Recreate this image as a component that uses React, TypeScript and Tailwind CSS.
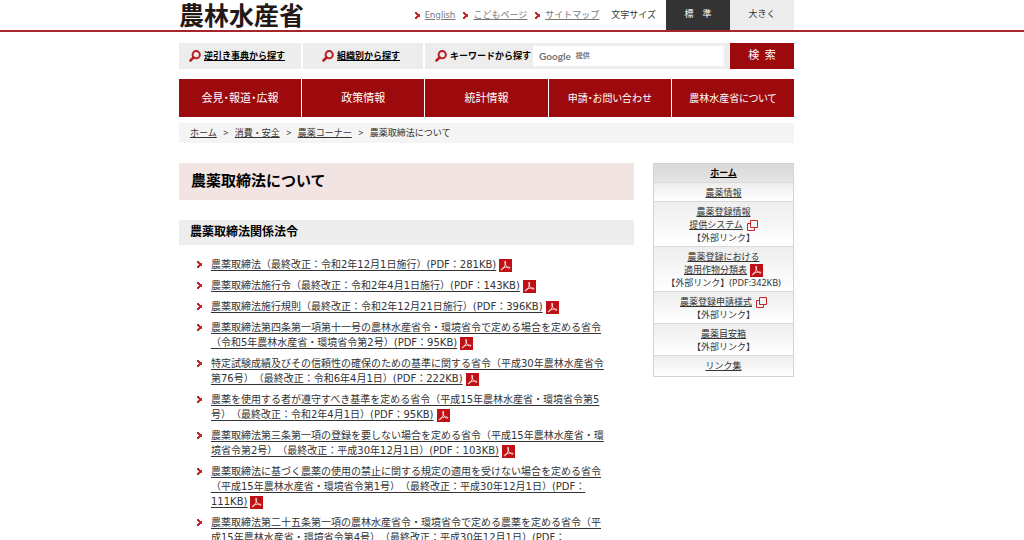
import React from 'react'
import clsx from 'clsx'

const HEADER_LINKS = ['English', 'こどもページ', 'サイトマップ']

const NAV_ITEMS = [
  '会見・報道・広報',
  '政策情報',
  '統計情報',
  '申請・お問い合わせ',
  '農林水産省について',
]

const BREADCRUMBS = ['ホーム', '消費・安全', '農薬コーナー']

// every entry is a list of its lines
const LAWS: string[][] = [
  ['農薬取締法（最終改正：令和2年12月1日施行）(PDF：281KB)'],
  ['農薬取締法施行令（最終改正：令和2年4月1日施行）(PDF：143KB)'],
  ['農薬取締法施行規則（最終改正：令和2年12月21日施行）(PDF：396KB)'],
  [
    '農薬取締法第四条第一項第十一号の農林水産省令・環境省令で定める場合を定める省令',
    '（令和5年農林水産省・環境省令第2号）(PDF：95KB)',
  ],
  [
    '特定試験成績及びその信頼性の確保のための基準に関する省令（平成30年農林水産省令',
    '第76号）（最終改正：令和6年4月1日）(PDF：222KB)',
  ],
  [
    '農薬を使用する者が遵守すべき基準を定める省令（平成15年農林水産省・環境省令第5',
    '号）（最終改正：令和2年4月1日）(PDF：95KB)',
  ],
  [
    '農薬取締法第三条第一項の登録を要しない場合を定める省令（平成15年農林水産省・環',
    '境省令第2号）（最終改正：平成30年12月1日）(PDF：103KB)',
  ],
  [
    '農薬取締法に基づく農薬の使用の禁止に関する規定の適用を受けない場合を定める省令',
    '（平成15年農林水産省・環境省令第1号）（最終改正：平成30年12月1日）(PDF：',
    '111KB)',
  ],
  [
    '農薬取締法第二十五条第一項の農林水産省令・環境省令で定める農薬を定める省令（平',
    '成15年農林水産省・環境省令第4号）（最終改正：平成30年12月1日）(PDF：',
  ],
]

interface SideItem {
  lines: string[]
  icon?: 'external' | 'pdf'
  note?: string
}

const SIDE_ITEMS: SideItem[] = [
  { lines: ['農薬情報'] },
  {
    lines: ['農薬登録情報', '提供システム'],
    icon: 'external',
    note: '【外部リンク】',
  },
  {
    lines: ['農薬登録における', '適用作物分類表'],
    icon: 'pdf',
    note: '【外部リンク】(PDF:342KB)',
  },
  { lines: ['農薬登録申請様式'], icon: 'external', note: '【外部リンク】' },
  { lines: ['農薬目安箱'], note: '【外部リンク】' },
  { lines: ['リンク集'] },
]

const ArrowIcon: React.FC = () => (
  <svg viewBox="0 0 5 7" className="h-[7px] w-[5px] shrink-0" fill="#c1272d">
    <path d="M0 0h2v1h1v1h2v3H3v1H2v1H0V5h1V4h1V3H1V2H0z" />
  </svg>
)

const SearchIcon: React.FC = () => (
  <svg
    viewBox="0 0 12 12"
    className="size-3 shrink-0"
    fill="none"
    stroke="#b81c22"
  >
    <circle cx="7.2" cy="4.700" r="3.600" strokeWidth="2" />
    <path d="M4.600 7.400 1.500 10.500" strokeWidth="2.500" strokeLinecap="round" />
  </svg>
)

const PdfIcon: React.FC = () => (
  <svg
    viewBox="0 0 13 13"
    className="ml-[3px] inline-block size-[13px] align-middle"
  >
    <rect width="13" height="13" fill="#c01015" />
    <path
      d="M6.1 2.2c-.8 0-.5 2 .4 3.7 1 1.900 2.600 3.300 4 3.300 1.200 0 .7-1.200-1.200-1.200-2.300 0-5.400.8-6.500 1.700-.9.800-.5 1.600.2 1.100C4.300 9.800 5.900 7 6.400 5c.4-1.500.3-2.800-.3-2.800z"
      fill="none"
      stroke="#fff"
      strokeWidth=".8"
    />
  </svg>
)

const ExternalIcon: React.FC = () => (
  <svg
    viewBox="0 0 11 11"
    className="ml-1 inline-block size-[11px] align-middle"
    fill="none"
    stroke="#c4262c"
  >
    <path d="M3.500 .5h7v7h-7zM3.500 3.500h-3v7h7v-3" />
  </svg>
)

const Header: React.FC = () => (
  <header className="border-b-2 border-[#a8262b] pr-[51px]">
    <div className="mx-auto flex h-[30px] max-w-[615px] items-center">
      <h1 className="text-[25px] leading-[30px] font-bold text-[#231815]">
        農林水産省
      </h1>
      <ul className="ml-auto flex items-center gap-2 text-[#777]">
        {HEADER_LINKS.map((label) => (
          <li key={label} className="flex items-center gap-[5px]">
            <ArrowIcon />
            <a href="#" className="underline">
              {label}
            </a>
          </li>
        ))}
      </ul>
      <span className="mr-[10px] ml-3">文字サイズ</span>
      <button className="h-[30px] w-16 bg-[#333] pb-[2px] text-white">
        標　準
      </button>
      <button className="h-[30px] w-16 bg-[#ededed] pb-[2px]">大きく</button>
    </div>
  </header>
)

const SearchBar: React.FC = () => (
  <div className="mt-[11px] flex h-[26px] gap-[2px] font-bold text-black">
    <a
      href="#"
      className="flex w-[122px] items-center gap-[3px] bg-[#ededed] pl-[10px] underline"
    >
      <SearchIcon />
      逆引き事典から探す
    </a>
    <a
      href="#"
      className="flex w-[120px] items-center gap-[3px] bg-[#ededed] pl-[19px] underline"
    >
      <SearchIcon />
      組織別から探す
    </a>
    <form className="flex flex-1">
      <div className="flex flex-1 items-center gap-[2px] bg-[#ededed] pr-[6px] pl-[10px]">
        <label htmlFor="keyword" className="flex items-center gap-[3px]">
          <SearchIcon />
          キーワードから探す
        </label>
        <div className="grid h-5 flex-1 items-center bg-white">
          <input
            id="keyword"
            type="text"
            className="peer col-start-1 row-start-1 h-5 w-full px-[6px] font-normal outline-none"
            placeholder=" "
          />
          <span className="pointer-events-none invisible col-start-1 row-start-1 flex items-center gap-[5px] pl-[6px] text-[#757575] peer-placeholder-shown:visible">
            <span className="font-[Lato,sans-serif] text-[10px]">Google</span>
            <span className="text-[7px]">提供</span>
          </span>
        </div>
      </div>
      <button
        type="button"
        className="w-16 bg-[#9d0a0e] pb-[2px] text-[11px] font-normal text-white"
      >
        検&nbsp; 索
      </button>
    </form>
  </div>
)

const SideMenu: React.FC = () => (
  <aside className="mt-5 w-[141px] shrink-0 self-start border border-[#d4d4d4] text-center leading-[13px]">
    <a
      href="#"
      className="block bg-linear-to-b from-[#dadada] to-[#e4e4e4] pt-[2px] pb-[3px] font-bold text-black underline"
    >
      ホーム
    </a>
    <ul>
      {SIDE_ITEMS.map((item) => (
        <li
          key={item.lines[0]}
          className="border-t border-[#d9d9d9] bg-linear-to-b from-[#eeeeee] to-white pt-[3px] pb-[2px] last:pb-1"
        >
          {item.lines.map((line, i) => (
            <div key={line} className="h-[13px] whitespace-nowrap">
              <a href="#" className="underline">
                {line}
              </a>
              {i === item.lines.length - 1 && item.icon === 'external' && (
                <ExternalIcon />
              )}
              {i === item.lines.length - 1 && item.icon === 'pdf' && (
                <PdfIcon />
              )}
            </div>
          ))}
          {item.note && <div className="whitespace-nowrap">{item.note}</div>}
        </li>
      ))}
    </ul>
  </aside>
)

const LawList: React.FC = () => (
  <ul className="mt-3 flex flex-col gap-[6px] pl-[18px] text-[10px] leading-[15px]">
    {LAWS.map((lines) => (
      <li key={lines[0]} className="flex gap-[9px]">
        <span className="flex h-[15px] items-center">
          <ArrowIcon />
        </span>
        <div>
          {lines.map((line, i) => (
            <div key={line} className="h-[15px] whitespace-nowrap">
              <a href="#" className="underline underline-offset-2">
                {line}
              </a>
              {i === lines.length - 1 && !line.endsWith('：') && <PdfIcon />}
            </div>
          ))}
        </div>
      </li>
    ))}
  </ul>
)

export default function App() {
  return (
    <div className="bg-white font-['Noto_Sans','Noto_Sans_CJK_JP',sans-serif] text-[9px] leading-[14px] text-[#333] [text-spacing-trim:space-all]">
      <Header />
      <div className="pr-[51px]">
        <div className="mx-auto max-w-[615px]">
          <SearchBar />
          <nav className="mt-[10px]">
            <ul className="grid grid-cols-5 gap-px">
              {NAV_ITEMS.map((label) => (
                <li key={label}>
                  <a
                    href="#"
                    className={clsx(
                      "flex h-[38px] items-center justify-center bg-[#9d0a0e] whitespace-nowrap text-white [font-feature-settings:'palt']",
                      label.length > 8 ? 'text-[10px]' : 'text-[11px]',
                    )}
                  >
                    {label}
                  </a>
                </li>
              ))}
            </ul>
          </nav>
          <div className="mt-[6px] flex h-5 items-center bg-[#f4f4f4] pl-[11px]">
            {BREADCRUMBS.map((label) => (
              <React.Fragment key={label}>
                <a href="#" className="underline">
                  {label}
                </a>
                <span className="w-[18px] text-center">&gt;</span>
              </React.Fragment>
            ))}
            <span>農薬取締法について</span>
          </div>
          <div className="flex gap-[19px]">
            <main className="mt-5 min-w-0 flex-1 font-['DejaVu_Sans','Noto_Sans_CJK_JP',sans-serif]">
              <h1 className="bg-[#f2e4e3] px-3 py-2 text-[15px] leading-[21px] font-bold text-black">
                農薬取締法について
              </h1>
              <h2 className="mt-5 bg-[#ededed] px-[11px] py-1 text-[12px] leading-[17px] font-bold text-black">
                農薬取締法関係法令
              </h2>
              <LawList />
            </main>
            <SideMenu />
          </div>
        </div>
      </div>
    </div>
  )
}
